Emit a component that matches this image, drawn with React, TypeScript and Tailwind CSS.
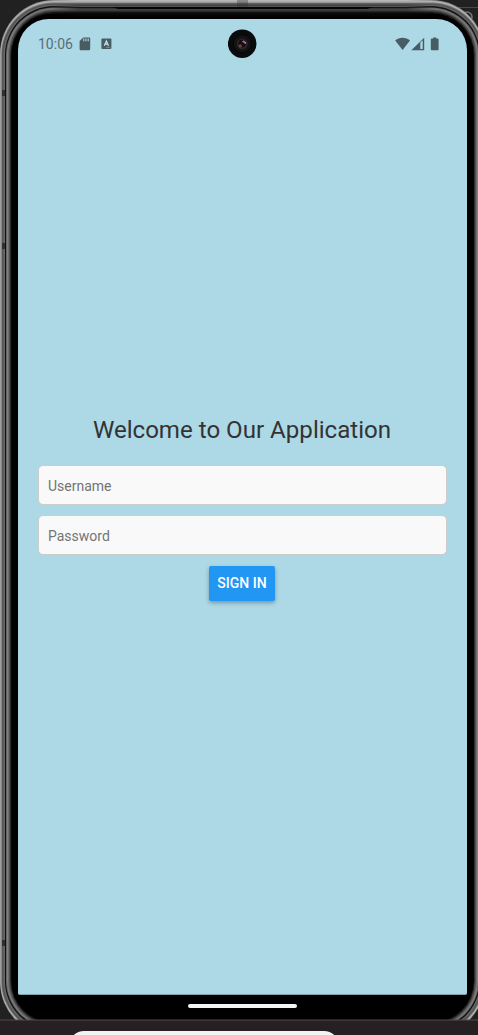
import React from "react";

const layers = [
  { x: 0, y: 0, r: 54, color: "#909090" },
  { x: 0.6, y: 1, r: 53, color: "#b2b2b2" },
  { x: 1.3, y: 2.6, r: 52, color: "#777777" },
  { x: 2, y: 3.6, r: 51, color: "#555555" },
  { x: 3.4, y: 5, r: 50, color: "#666666" },
  { x: 5, y: 6, r: 49, color: "#101010" },
  { x: 6, y: 7.5, r: 48, color: "#666666" },
  { x: 7, y: 8.6, r: 47, color: "#808080" },
  { x: 8, y: 9, r: 46, color: "#6c6c6c" },
  { x: 9, y: 9.7, r: 45, color: "#505050" },
  { x: 10, y: 11, r: 44, color: "#343434" },
  { x: 10.7, y: 12, r: 43, color: "#181818" },
  { x: 11.3, y: 13.4, r: 42, color: "#000000" },
];

function DeviceBody() {
  return (
    <svg className="absolute inset-0" width="478" height="1035" viewBox="0 0 478 1035" aria-hidden="true">
      <defs>
        <linearGradient id="topEdge" x1="0" y1="0" x2="0" y2="1">
          <stop offset="0" stopColor="#bcbcbc" />
          <stop offset=".13" stopColor="#a2a2a2" />
          <stop offset=".18" stopColor="#656565" />
          <stop offset=".3" stopColor="#3d3d3d" />
          <stop offset=".35" stopColor="#686868" />
          <stop offset=".4" stopColor="#080808" />
          <stop offset=".46" stopColor="#343434" />
          <stop offset=".55" stopColor="#454545" />
          <stop offset=".72" stopColor="#0a0a0a" />
          <stop offset="1" stopColor="#000" />
        </linearGradient>
        <linearGradient id="fade" x1="0" y1="0" x2="1" y2="0">
          <stop offset="0" stopColor="#000" />
          <stop offset=".07" stopColor="#fff" />
          <stop offset=".93" stopColor="#fff" />
          <stop offset="1" stopColor="#000" />
        </linearGradient>
        <mask id="edgeMask">
          <rect x="52" y="0" width="381" height="18" fill="url(#fade)" />
        </mask>
      </defs>
      <rect width="478" height="1035" fill="#212121" />
      <path d="M430 7.5h48" stroke="#484848" />
      <circle cx="467" cy="17" r="5" fill="none" stroke="#777" strokeWidth="1.5" />
      {layers.map(({ x, y, r, color }) => (
        <rect key={x} x={x} y={y} width={485 - x * 2} height={1036 - y * 2} rx={r} fill={color} />
      ))}
      <rect x="52" y="0" width="381" height="18" fill="url(#topEdge)" mask="url(#edgeMask)" />
      <path d="M112 7h261l-6 2H118z" fill="#050505" />
      <path d="M237 0h11v7h-11z" fill="#333" opacity=".35" />
      <path d="M2 90h3v6H2zM2 243h3v6H2zM2 940h3v6H2z" fill="#303030" />
      <rect y="1020" width="478" height="15" fill="#272022" />
      <rect y="1019.5" width="478" height="1" fill="#504b4d" />
      <rect x="69" y="1031" width="270" height="40" rx="15" fill="#f3f3f3" />
    </svg>
  );
}

function Camera() {
  return (
    <svg className="absolute left-[210px] top-[10px]" width="29" height="30" viewBox="0 0 29 30" aria-hidden="true">
      <circle cx="14.2" cy="14.7" r="14.3" fill="#090b0c" />
      <circle cx="14.2" cy="14.7" r="9" fill="#131313" stroke="#060606" />
      <circle cx="14.2" cy="14.9" r="5.5" fill="#292729" />
      <circle cx="14.2" cy="14.6" r="3.8" fill="#1c0a12" />
      <circle cx="15.6" cy="12.6" r="1.2" fill="#a36b8c" />
      <circle cx="17.2" cy="13.8" r=".9" fill="#d6a3c7" />
      <circle cx="12.3" cy="16.9" r="1.6" fill="#5a4c40" />
    </svg>
  );
}

function StatusBar() {
  return (
    <header className="flex h-[50px] items-center pl-5 pr-[27px] text-[#485c64]">
      <span className="w-[40.5px] text-[14px] leading-4 text-[#586e76]">10:06</span>
      <svg width="12" height="14" viewBox="0 0 12 14" aria-hidden="true">
        <path d="M4.2.5h6a1 1 0 011 1V12a1.3 1.3 0 01-1.3 1.3h-8A1.3 1.3 0 01.6 12V4z" fill="currentColor" />
        <path d="M4.8 1.5v2.8M7 1.5v2.8M9.2 1.5v2.8" stroke="#b7d8e1" strokeWidth="1.1" />
      </svg>
      <svg className="ml-[10.5px]" width="12" height="12" viewBox="0 0 12 12" aria-hidden="true">
        <rect x=".4" y=".6" width="10" height="10.4" rx="1" fill="currentColor" />
        <path d="M3.3 7.8L5.4 3l2.1 4.8M4.1 6.2h2.5" fill="none" stroke="#c5e5ed" strokeWidth="1.2" />
        <path d="M5 9.3h4" stroke="#83a0a9" strokeWidth=".8" />
      </svg>
      <div className="ml-auto flex items-center">
        <svg width="16" height="14" viewBox="0 0 16 14" aria-hidden="true">
          <path d="M.2 3.4C4.2-.2 11-.2 15 3.4L7.6 13.1z" fill="currentColor" />
        </svg>
        <svg width="15" height="14" viewBox="0 0 15 14" aria-hidden="true">
          <path d="M13.2.8v12.5H.3z" fill="currentColor" />
          <path d="M9.3 5.6l2.4-2.3V12H9.3z" fill="#add8e6" />
        </svg>
        <svg className="ml-[4px]" width="10" height="14" viewBox="0 0 10 14" aria-hidden="true">
          <path d="M3.2.5h3v1h1.4a1 1 0 011 1v9.8a1 1 0 01-1 1H1.8a1 1 0 01-1-1V2.5a1 1 0 011-1h1.4z" fill="currentColor" />
        </svg>
      </div>
    </header>
  );
}

const fieldClass =
  "block h-[40px] w-full rounded-[5px] border border-[#ccc] bg-[#f9f9f9] px-[9px] pt-px text-[14px] text-[#333] placeholder:text-[#747474] placeholder:opacity-100 outline-none";

export default function App() {
  return (
    <div className="relative h-[1035px] w-[478px] overflow-hidden bg-[#212121] font-['Roboto',sans-serif]">
      <DeviceBody />
      <div className="relative flex h-full flex-col pl-[18px] pt-[19px]">
        <main className="relative flex h-[976px] w-[449px] shrink-0 flex-col rounded-b-[2px] rounded-t-[31px] border-b border-[#82a2ad] bg-[#add8e6]">
          <StatusBar />
          <Camera />
          <form className="mt-[345px] flex flex-col items-center px-5" onSubmit={(event) => event.preventDefault()}>
            <h1 className="mr-px text-[24.1px] leading-8 whitespace-nowrap text-[#333]">Welcome to Our Application</h1>
            <input className={`${fieldClass} mt-[19px]`} placeholder="Username" aria-label="Username" />
            <input className={`${fieldClass} mt-[10px]`} type="password" placeholder="Password" aria-label="Password" />
            <button className="mr-px mt-[10.5px] h-[35px] w-[66px] rounded-[2px] bg-[#2196f3] text-[14px] font-medium text-white shadow-[0_2px_4px_rgba(0,0,0,0.3)]">
              SIGN IN
            </button>
          </form>
        </main>
        <div className="ml-[170px] mt-[9px] h-[4px] w-[109px] shrink-0 rounded-full bg-[#f4f4f4]" />
      </div>
    </div>
  );
}
